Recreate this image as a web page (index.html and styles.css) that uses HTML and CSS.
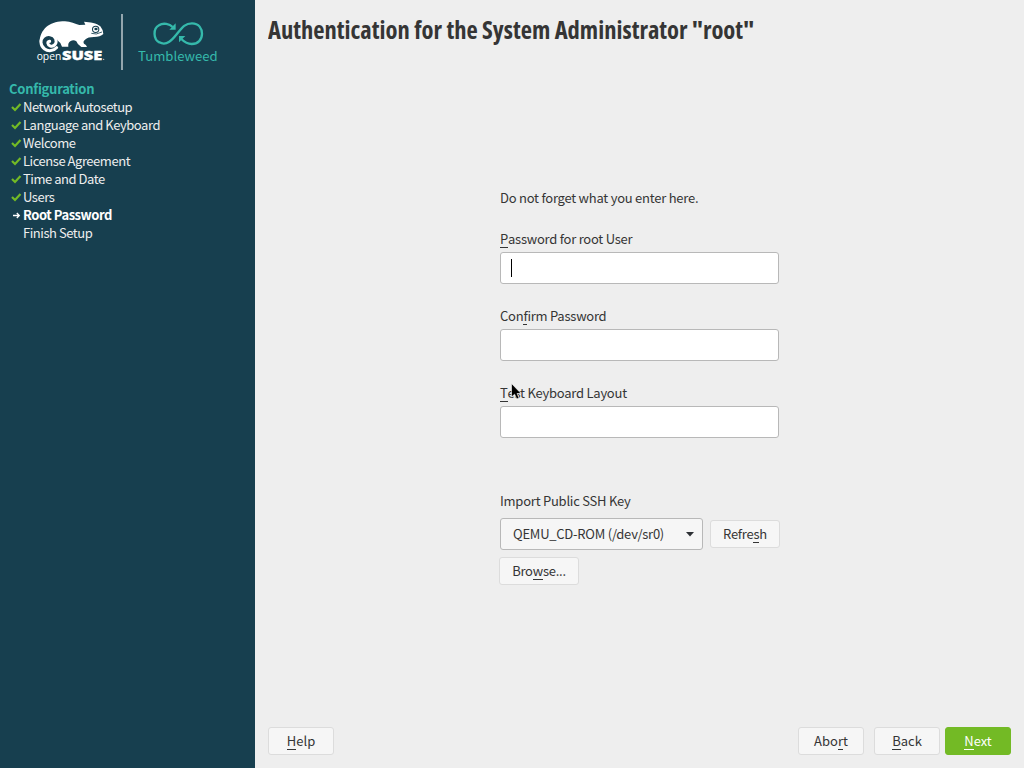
FILE: index.html
```html
<!DOCTYPE html>
<html lang="en">
<head>
<meta charset="utf-8">
<title>YaST Configuration</title>
<link rel="stylesheet" href="styles.css">
</head>
<body>
<div class="installer">
  <aside class="sidebar">
    <svg class="brand" width="255" height="80" viewBox="0 0 255 80" aria-label="openSUSE Tumbleweed">
      <g transform="translate(25 5) scale(.33333)">
        <path fill="#fff" d="M44 112C44 74 74 50 112 49C132 46 149 55 163 60L181 59L177 50C196 51 215 54 226 64Q235 75 235 87Q226 96 207 96C195 96 186 98 180 104Q173 109 177 116Q184 118 186 126L169 126Q157 119 154 109Q146 103 137 108Q128 113 130 125L111 125Q107 112 97 106L80 110Z"/>
        <ellipse cx="73" cy="113" rx="25" ry="24" fill="#173f4f"/>
        <path fill="none" stroke="#fff" stroke-width="9" stroke-linecap="round" d="M95 128C87 138 69 140 59 132C45 122 45 104 55 95C66 84 87 88 92 101C97 115 87 126 76 123C67 120 66 110 74 109"/>
        <circle cx="212" cy="73" r="9.5" fill="#fff" stroke="#173f4f" stroke-width="3.2"/>
        <ellipse cx="213" cy="72" rx="5" ry="3.5" fill="#173f4f"/>
        <path fill="none" stroke="#173f4f" stroke-width="2.5" d="M199 85Q213 91 231 81"/>
        <text class="logo-light" x="35" y="164" textLength="74" lengthAdjust="spacingAndGlyphs">open</text>
        <text class="logo-bold" x="111" y="166" textLength="121" lengthAdjust="spacingAndGlyphs">SUSE</text>
        <circle cx="236" cy="163" r="2" fill="#c5d0d4"/>
      </g>
      <rect x="121" y="14" width="2" height="56" fill="#94a6ae"/>
      <g transform="translate(110 5) scale(.33333)">
        <path fill="none" stroke="#35b9ab" stroke-width="7" d="M188 66C179 57 160 52 147 61C128 71 130 103 148 112C170 125 188 103 200 88C216 68 224 55 246 55C267 55 276 71 276 86C276 104 264 117 245 117C233 117 224 112 214 102"/>
        <path fill="#35b9ab" d="M197 55V74H178ZM207 93H226L207 112Z"/>
        <text class="logo-product" x="84" y="168" textLength="239" lengthAdjust="spacingAndGlyphs">Tumbleweed</text>
      </g>
    </svg>
    <h2 class="steps-title">Configuration</h2>
    <ul class="steps">
      <li class="step"><svg class="mark" viewBox="0 0 14 18"><path class="check" d="M3 9L6 12L11.5 6"/></svg>Network Autosetup</li>
      <li class="step"><svg class="mark" viewBox="0 0 14 18"><path class="check" d="M3 9L6 12L11.5 6"/></svg>Language and Keyboard</li>
      <li class="step"><svg class="mark" viewBox="0 0 14 18"><path class="check" d="M3 9L6 12L11.5 6"/></svg>Welcome</li>
      <li class="step"><svg class="mark" viewBox="0 0 14 18"><path class="check" d="M3 9L6 12L11.5 6"/></svg>License Agreement</li>
      <li class="step"><svg class="mark" viewBox="0 0 14 18"><path class="check" d="M3 9L6 12L11.5 6"/></svg>Time and Date</li>
      <li class="step"><svg class="mark" viewBox="0 0 14 18"><path class="check" d="M3 9L6 12L11.5 6"/></svg>Users</li>
      <li class="step current"><svg class="mark" viewBox="0 0 14 18"><path class="arrow" d="M4 9.5H10M7.8 7L10.3 9.5L7.8 12"/></svg>Root Password</li>
      <li class="step"><svg class="mark" viewBox="0 0 14 18"></svg>Finish Setup</li>
    </ul>
  </aside>
  <main class="content">
    <h1 class="heading"><svg width="500" height="44"><text class="heading-text" x="0" y="31" textLength="486" lengthAdjust="spacingAndGlyphs">Authentication for the System Administrator "root"</text></svg></h1>
    <form class="form">
      <p class="note">Do not forget what you enter here.</p>
      <div class="field"><div class="label"><span class="key">P</span>assword for root User</div><div class="input"><span class="caret"></span></div></div>
      <div class="field"><div class="label confirm">Con<span class="key">f</span>irm Password</div><div class="input"></div></div>
      <div class="field last"><div class="label"><span class="key">T</span>est Keyboard Layout</div><div class="input"></div>
        <svg class="pointer" width="12" height="18" viewBox="0 0 12 18"><path d="M.5 .5V14L3.6 11.2L5.8 16L8 15L6 10.5H10Z" fill="#000" stroke="#fff" stroke-width=".6"/></svg>
      </div>
      <div class="label">Import Public SSH Key</div>
      <div class="device-row">
        <div class="select"><span>QEMU_CD-ROM (/dev/sr0)</span><svg width="8" height="5"><path d="M0 0H8L4 4.4Z" fill="#2d3135"/></svg></div>
        <div class="button refresh"><span>Refre<span class="key">s</span>h</span></div>
      </div>
      <div class="button browse"><span>Bro<span class="key">w</span>se...</span></div>
    </form>
    <footer class="actions">
      <div class="button"><span><span class="key">H</span>elp</span></div>
      <div class="button abort"><span>Abo<span class="key">r</span>t</span></div>
      <div class="button back"><span><span class="key">B</span>ack</span></div>
      <div class="button next"><span><span class="key">N</span>ext</span></div>
    </footer>
  </main>
</div>
</body>
</html>
```
FILE: styles.css
```css
* { box-sizing: border-box; }
body { margin: 0; color: #353535; font: 13px/18px "Noto Sans CJK SC", sans-serif; }
.installer { display: flex; width: 1024px; height: 768px; background: #eee; }
.sidebar { width: 255px; background: #173f4f; color: #eee; }
.brand { display: block; }
.logo-light { font: 400 31px "Open Sans", sans-serif; fill: #fff; }
.logo-bold { font: 800 38px "Open Sans", sans-serif; fill: #fff; stroke: #fff; stroke-width: 1; }
.logo-product { font: 400 38px "Noto Sans CJK SC", sans-serif; fill: #35b9ab; }
.steps-title { margin: 0 0 0 9px; font-size: 13px; line-height: 18px; letter-spacing: -.24px; color: #35b9ab; }
.steps { list-style: none; margin: 0; padding: 0 0 0 9px; letter-spacing: -.46px; }
.step { display: flex; height: 18px; white-space: nowrap; }
.mark { width: 14px; height: 18px; flex: none; }
.check { fill: none; stroke: #73ba25; stroke-width: 2.2; }
.arrow { fill: none; stroke: #fff; stroke-width: 1.3; }
.current { font-weight: 700; color: #fff; }
.content { flex: 1; display: flex; flex-direction: column; padding: 8px 13px 13px; }
.heading { margin: 0; height: 44px; }
.heading svg { display: block; }
.heading-text { font: 700 24.5px "Open Sans", sans-serif; font-stretch: 75%; fill: #353535; }
.form { width: 280px; margin: 137px 0 0 232px; letter-spacing: -.24px; }
.note { margin: 0 0 23px; }
.label { height: 18px; white-space: nowrap; }
.key { display: inline-block; height: 18px; border-bottom: 1px solid currentColor; vertical-align: top; }
.field { position: relative; margin-bottom: 23px; }
.input { width: 279px; height: 32px; margin-top: 4px; padding: 6px 10px; background: #fff; border: 1px solid #b8b8b8; border-radius: 3px; }
.caret { display: block; width: 1px; height: 18px; background: #000; }
.last { margin-bottom: 54px; }
.pointer { position: absolute; left: 11px; top: -1px; }
.device-row { display: flex; align-items: center; margin-top: 8px; gap: 7px; }
.select { display: flex; align-items: center; justify-content: space-between; width: 203px; height: 32px; padding: 0 8px 0 12px; background: #f6f6f6; border: 1px solid #b8b8b8; border-radius: 3px; }
.button { display: flex; align-items: center; justify-content: center; width: 66px; height: 28px; background: #f6f6f6; border: 1px solid #dcdcdc; border-radius: 3px; }
.refresh { width: 70px; }
.browse { width: 80px; margin: 7px 0 0 -1px; }
.actions { display: flex; margin-top: auto; }
.abort { margin-left: auto; }
.back { margin-left: 10px; }
.next { margin-left: 5px; background: #73ba25; border-color: #73ba25; color: #fff; }
```
